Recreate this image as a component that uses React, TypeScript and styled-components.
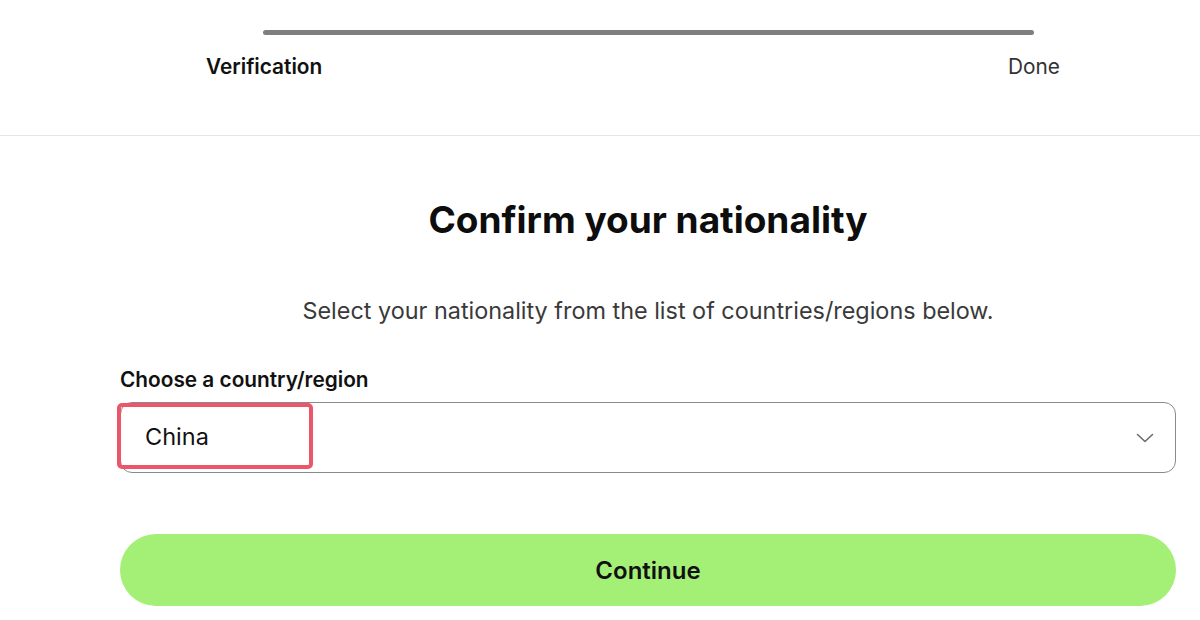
import React from 'react';
import styled, { createGlobalStyle } from 'styled-components';

const GlobalStyle = createGlobalStyle`
  html, body {
    margin: 0;
    padding: 0;
    background: #fff;
    font-family: Inter, "Liberation Sans", sans-serif;
    color: #121212;
  }
`;

export default function App() {
  return (
    <>
      <GlobalStyle />
      <Header>
        <Stepper>
          <Track />
          <Steps>
            <StepLabel $active>Verification</StepLabel>
            <StepLabel>Done</StepLabel>
          </Steps>
        </Stepper>
      </Header>

      <Main>
        <Title>Confirm your nationality</Title>
        <Subtitle>Select your nationality from the list of countries/regions below.</Subtitle>

        <Field>
          <FieldLabel>Choose a country/region</FieldLabel>
          <SelectBox>
            <SelectValue>China</SelectValue>
            <svg width="20" height="20" viewBox="0 0 20 20" fill="none">
              <path d="M2.5 6.5 L10 13.5 L17.5 6.5" stroke="#6b6b6b" strokeWidth="1.6" strokeLinecap="round" strokeLinejoin="round" />
            </svg>
            <Highlight />
          </SelectBox>
        </Field>

        <ContinueButton>Continue</ContinueButton>
      </Main>
    </>
  );
}

const Header = styled.header`
  height: 136px;
  border-bottom: 1px solid #e6e6e6;
  box-sizing: border-box;
  padding-top: 30px;
`;

const Stepper = styled.div`
  width: 854px;
  margin-left: 206px;
`;

const Track = styled.div`
  height: 5px;
  margin: 0 26px 0 57px;
  border-radius: 3px;
  background: #7f7f7f;
`;

const Steps = styled.div`
  display: flex;
  justify-content: space-between;
  margin-top: 19px;
`;

const StepLabel = styled.span<{ $active?: boolean }>`
  font-size: 20.8px;
  line-height: 26px;
  font-weight: ${p => (p.$active ? 600 : 400)};
  color: ${p => (p.$active ? '#111' : '#333')};
`;

const Main = styled.main`
  width: 1056px;
  margin-left: 120px;
  display: flex;
  flex-direction: column;
`;

const Title = styled.h1`
  margin: 62px 0 0;
  text-align: center;
  font-size: 37px;
  line-height: 44px;
  font-weight: 700;
  color: #0d0d0d;
`;

const Subtitle = styled.p`
  margin: 55px 0 0;
  text-align: center;
  font-size: 23.4px;
  line-height: 28px;
  color: #3a3a3a;
`;

const Field = styled.div`
  margin-top: 42px;
  display: flex;
  flex-direction: column;
`;

const FieldLabel = styled.label`
  font-size: 20.8px;
  line-height: 26px;
  font-weight: 600;
  color: #111;
`;

const SelectBox = styled.div`
  position: relative;
  margin-top: 9px;
  height: 71px;
  box-sizing: border-box;
  border: 1px solid #8a8a8a;
  border-radius: 12px;
  display: flex;
  align-items: center;
  justify-content: space-between;
  padding: 0 20px 0 24px;
`;

const SelectValue = styled.span`
  font-size: 23.5px;
  color: #111;
  margin-top: -2px;
`;

const Highlight = styled.div`
  position: absolute;
  left: -4px;
  top: 0;
  width: 196px;
  height: 66px;
  box-sizing: border-box;
  border: 4px solid #ec566b;
  border-radius: 5px;
  pointer-events: none;
`;

const ContinueButton = styled.button`
  margin-top: 61px;
  height: 72px;
  border: none;
  border-radius: 36px;
  background: #a4ef76;
  font-family: inherit;
  font-size: 24px;
  font-weight: 600;
  color: #111;
  cursor: pointer;
`;
